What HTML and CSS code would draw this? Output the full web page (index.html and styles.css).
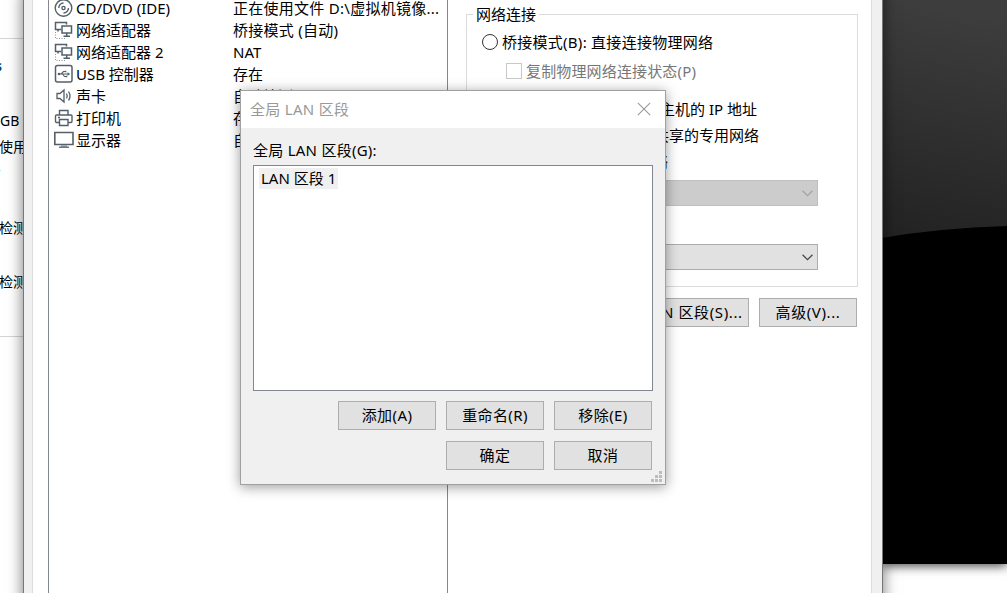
FILE: index.html
```html
<!DOCTYPE html>
<html lang="zh-CN">
<head>
<meta charset="utf-8">
<title>全局 LAN 区段</title>
<link rel="stylesheet" href="styles.css">
</head>
<body>
<svg class="defs" width="0" height="0">
  <symbol id="net" viewBox="0 0 20 20"><g fill="none" stroke="#536069"><path d="M7 9.500H1.500V2.500H12.500V4.500" stroke-width="1.500"/><path d="M8 6H17.500V13H8Z" stroke-width="1.500"/><path d="M4 9.500V11.500M12.700 13V16M9.500 16.200H16" stroke-width="1.500"/><path d="M1.500 12V18.500H12" stroke-dasharray="1 1.500" stroke="#8c959b"/></g></symbol>
  <symbol id="arrow" viewBox="0 0 10 6"><path d="M.5 .5 5 5 9.500 .5" fill="none" stroke="currentColor" stroke-width="1.1"/></symbol>
</svg>
<main class="desktop">
  <aside class="summary">
    <span class="item blue">s</span>
    <span class="item memory">GB</span>
    <span class="item usage">使用</span>
    <span class="item dash">-</span>
    <span class="item detect">检测</span>
    <span class="item detect second">检测</span>
  </aside>
  <div class="wallpaper"><svg width="125" height="564" viewBox="0 0 125 564"><defs><linearGradient id="sheen" x1=".1" x2="0" y2="1"><stop stop-color="#3d3d3d"/><stop offset="1" stop-color="#222"/></linearGradient></defs><path fill="url(#sheen)" d="M0 0H125V226Q57 228 0 238Z"/></svg></div>
  <section class="settings">
    <div class="hardware">
      <div class="row"><svg class="icon" viewBox="0 0 20 20"><g fill="none" stroke="#536069" stroke-width="1.400"><circle cx="9.500" cy="10" r="8.300"/><circle cx="9.500" cy="10" r="1.600"/><path d="M4.800 10A5 5 0 0 1 9.500 5M14.500 10A5 5 0 0 1 9.500 15"/></g></svg><span>CD/DVD (IDE)</span><span class="wide">正在使用文件 D:\虚拟机镜像...</span></div>
      <div class="row"><svg class="icon"><use href="#net"/></svg><span>网络适配器</span><span class="wide">桥接模式 (自动)</span></div>
      <div class="row"><svg class="icon"><use href="#net"/></svg><span>网络适配器 2</span><span>NAT</span></div>
      <div class="row"><svg class="icon" viewBox="0 0 20 20"><g fill="none" stroke="#536069" stroke-width="1.100"><rect x="1.500" y="1.500" width="16.500" height="16.500" rx="2" stroke-width="1.500"/><path d="M5 10H15M7 10 9.500 7.500H11M8.500 10 10.500 12.500H12"/></g><circle cx="5" cy="10" r="1.300" fill="#536069"/><path d="m13.500 8.200 2.700 1.800-2.700 1.800ZM10.700 6.700h1.600v1.600h-1.600ZM11.700 11.700h1.600v1.600h-1.600Z" fill="#536069"/></svg><span>USB 控制器</span><span>存在</span></div>
      <div class="row"><svg class="icon" viewBox="0 0 20 20"><g fill="none" stroke="#536069" stroke-width="1.300"><path d="M3 7.500H6L10 4V16L6 12.500H3ZM12.500 7.500Q14 10 12.500 12.500M14.500 5.500Q17.500 10 14.500 14.500"/></g></svg><span>声卡</span><span>自动检测</span></div>
      <div class="row"><svg class="icon" viewBox="0 0 20 20"><g fill="none" stroke="#536069" stroke-width="1.400"><path d="M5.500 7V2.500H14V7M5.500 14.500H2.500Q1.500 14.500 1.500 13V8Q1.500 7 2.500 7H17Q18 7 18 8V13Q18 14.500 17 14.500H14M5.500 11.500H14V17.500H5.500ZM4 9.500h2"/></g></svg><span>打印机</span><span>存在</span></div>
      <div class="row"><svg class="icon" viewBox="0 0 20 20"><path d="M.8 2.500H19V14.500H.8Z" fill="none" stroke="#536069" stroke-width="1.600"/><path d="M7 15h6v2h-6Z" fill="#a4adb2"/><path d="M5 17.200H15" stroke="#536069" stroke-width="1.300"/></svg><span>显示器</span><span>自动检测</span></div>
    </div>
    <div class="network">
      <fieldset class="group">
        <legend>网络连接</legend>
        <label class="option bridge"><i class="radio"></i><span class="wide">桥接模式(B): 直接连接物理网络</span></label>
        <label class="option copy"><i class="check"></i><span>复制物理网络连接状态(P)</span></label>
        <label class="option nat"><i class="radio"></i><span>NAT 模式(N): 用于共享主机的 IP 地址</span></label>
        <label class="option host"><i class="radio"></i><span>仅主机模式(H): 与主机共享的专用网络</span></label>
        <label class="option custom"><i class="radio"></i><span>自定义(U): 特定虚拟网络</span></label>
        <div class="select off"><svg width="11" height="7"><use href="#arrow"/></svg></div>
        <div class="select"><svg width="11" height="7"><use href="#arrow"/></svg></div>
      </fieldset>
      <div class="actions"><div class="button lan">LAN 区段(S)...</div><div class="button">高级(V)...</div></div>
    </div>
  </section>
  <section class="dialog">
    <header><span>全局 LAN 区段</span><svg width="14" height="14" viewBox="0 0 14 14"><path d="M.8.8 13.200 13.200M13.200.8.8 13.200" stroke="#999" stroke-width="1.100"/></svg></header>
    <div class="content">
      <div class="caption">全局 LAN 区段(G):</div>
      <div class="list"><span>LAN 区段 1</span></div>
      <div class="buttons"><div class="button">添加(A)</div><div class="button">重命名(R)</div><div class="button">移除(E)</div></div>
      <div class="buttons"><div class="button">确定</div><div class="button">取消</div></div>
    </div>
    <svg class="grip" width="11" height="11"><path d="M8 0h3v3h-3ZM4 4h3v3h-3ZM8 4h3v3h-3ZM0 8h3v3h-3ZM4 8h3v3h-3ZM8 8h3v3h-3Z" fill="#bdbdbd"/></svg>
  </section>
</main>
</body>
</html>
```
FILE: styles.css
```css
* { box-sizing: border-box; }
body { margin: 0; font: 370 15px/22px "Noto Sans", "Noto Sans CJK SC", sans-serif; color: #000; }
.defs { position: absolute; }
.desktop { position: relative; width: 1007px; height: 593px; overflow: hidden; background: #fff; }
.summary { position: absolute; left: 0; top: 38px; width: 24px; height: 299px; overflow: hidden; border: solid #d5d5d5; border-width: 1px 0; display: flex; flex-direction: column; align-items: flex-start; white-space: nowrap; font-size: 14px; }
.item { height: 22px; flex: none; }
.blue { color: #123f70; font-weight: bold; margin: 16px 0 0 -5px; }
.memory { margin-top: 33px; }
.usage { margin: 4px 0 0 -1px; }
.dash { margin: 1px 0 0 -4px; }
.detect { margin: 36px 0 0 -1px; }
.second { margin-top: 32px; }
.wallpaper { position: absolute; left: 882px; top: 0; width: 125px; height: 564px; background: #000; box-shadow: 0 2px 10px #000b; }
.wallpaper svg { display: block; }
.settings { position: absolute; left: 23px; top: -10px; width: 860px; height: 620px; display: flex; background: linear-gradient(#fff, #fff) 9px 0 / 838px 100% no-repeat #f0f0f0; border: 1px solid #777; box-shadow: 0 0 14px #0008; padding: 0 24px; }
.settings::before { content: ""; position: absolute; left: 8px; right: 10px; top: 0; bottom: 0; border: solid #dcdcdc; border-width: 0 1px; }
.hardware { width: 400px; border: 1px solid #828790; padding: 5px 0 0 5px; }
.row { display: grid; grid-template-columns: 22px 157px 215px; height: 22px; white-space: nowrap; align-items: center; }
.wide { letter-spacing: .27px; }
.icon { width: 20px; height: 20px; }
.network { flex: 1; padding: 12px 0 0 18px; }
.group { height: 284px; width: 392px; border: 1px solid #dcdcdc; margin: 0; padding: 0; min-width: 0; }
legend { height: 22px; line-height: 22px; margin: 0 0 0 6px; padding: 0 3px; }
.option { display: flex; height: 22px; align-items: center; white-space: nowrap; }
.bridge { margin: 6px 0 0 15px; gap: 4px; }
.copy { margin: 7px 0 0 39px; gap: 4px; color: #777; letter-spacing: .15px; }
.nat { margin: 16px 100px 0 0; justify-content: flex-end; }
.host { margin: 4px 98px 0 0; justify-content: flex-end; }
.custom { margin: 4px 189px 0 0; justify-content: flex-end; }
.radio { width: 16px; height: 16px; border: 1px solid #333; border-radius: 50%; background: #fff; flex: none; }
.check { width: 16px; height: 16px; border: 1px solid #c8c8c8; }
.select { width: 336px; height: 26px; margin: 38px 0 0 15px; border: 1px solid #adadad; background: #e1e1e1; color: #444; display: flex; align-items: center; justify-content: flex-end; padding-right: 4px; }
.select.off { background: #ccc; border-color: #bfbfbf; margin-top: 8px; color: #a3a3a3; }
.actions { display: flex; justify-content: flex-end; gap: 10px; margin: 11px 1px 0 0; }
.actions .button { letter-spacing: .6px; }
.actions .lan { padding-left: 4px; }
.button { width: 98px; height: 29px; padding-bottom: 2px; border: 1px solid #adadad; background: #e1e1e1; display: flex; align-items: center; justify-content: center; white-space: nowrap; flex: none; letter-spacing: .4px; }
.lan { width: 116px; }
.dialog { position: absolute; left: 240px; top: 90px; width: 426px; height: 395px; border: 1px solid #a0a0a0; background: #f0f0f0; box-shadow: 0 2px 12px #0006; }
.dialog header { height: 37px; background: #fff; color: #999; display: flex; align-items: center; justify-content: space-between; padding: 0 14px 2px 9px; letter-spacing: .3px; }
.content { padding: 11px 12px; display: flex; flex-direction: column; }
.caption { height: 26px; letter-spacing: .25px; }
.list { height: 226px; background: #fff; border: 1px solid #828790; padding: 1px 5px; margin-bottom: 10px; }
.list span { display: inline-block; height: 21px; line-height: 20px; background: #f0f0f0; padding: 0 2px; }
.buttons { display: flex; justify-content: flex-end; gap: 10px; padding-right: 1px; margin-bottom: 11px; }
.grip { position: absolute; right: 3px; bottom: 2px; }
```
